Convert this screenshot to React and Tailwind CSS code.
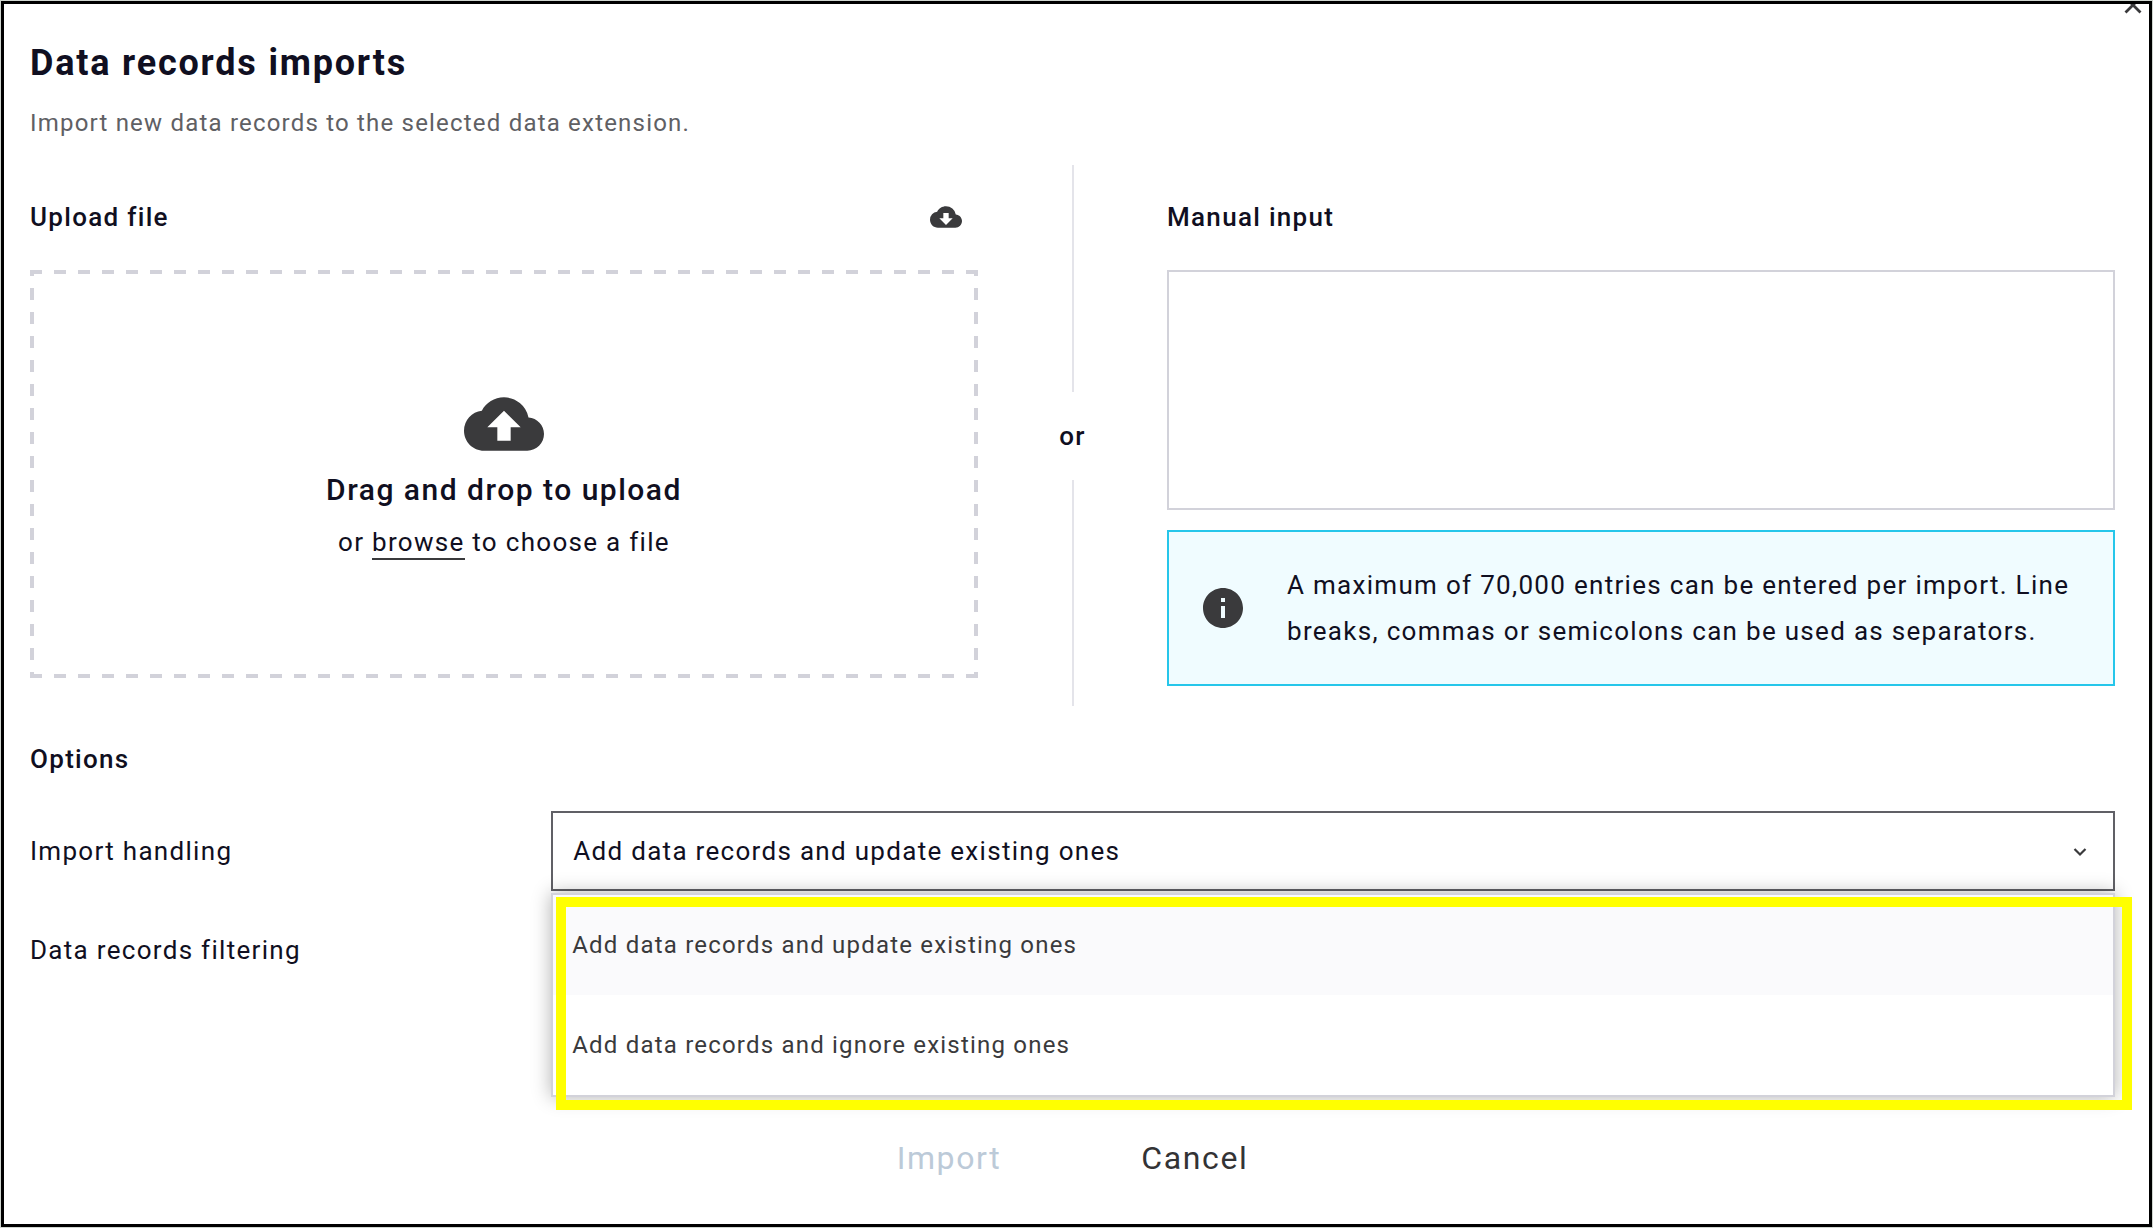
import { MdCloudDownload, MdCloudUpload, MdInfo } from "react-icons/md";

const handlingOptions = [
  "Add data records and update existing ones",
  "Add data records and ignore existing ones",
];

function CloseButton() {
  return (
    <button type="button" aria-label="Close" className="absolute -top-2 right-1.5 h-5 w-5 text-[#3a3a3c]">
      <svg viewBox="0 0 20 20" className="h-5 w-5" fill="none" stroke="currentColor" strokeWidth="2.8">
        <path d="M2.5 1.5 17.5 16.5M17.5 1.5 2.5 16.5" />
      </svg>
    </button>
  );
}

function UploadPanel() {
  return (
    <section className="flex flex-col gap-[37px] pt-9 pb-7">
      <div className="flex h-8 items-center justify-between pr-4">
        <h2 className="text-[26px] leading-8 font-medium">Upload file</h2>
        <button type="button" aria-label="Download template" className="text-[#3a3a3c]">
          <MdCloudDownload className="h-8 w-8" />
        </button>
      </div>
      <div className="flex grow flex-col items-center justify-center pb-0.5 [background-image:linear-gradient(90deg,#d2d2da_6px,transparent_6px_18px,#d2d2da_18px),linear-gradient(90deg,#d2d2da_6px,transparent_6px_18px,#d2d2da_18px),linear-gradient(#d2d2da_6px,transparent_6px_18px,#d2d2da_18px),linear-gradient(#d2d2da_6px,transparent_6px_18px,#d2d2da_18px)] [background-position:top,bottom,left,right] [background-repeat:repeat-x,repeat-x,repeat-y,repeat-y] [background-size:24px_4px,24px_4px,4px_24px,4px_24px]">
        <MdCloudUpload className="h-20 w-20 text-[#3a3a3c]" />
        <p className="mt-1.5 text-[30px] leading-10 font-medium">Drag and drop to upload</p>
        <p className="mt-3 text-[26px] leading-10">
          or{" "}
          <button type="button" className="border-b-2 border-[#3a3a3c] leading-8">
            browse
          </button>{" "}
          to choose a file
        </p>
      </div>
    </section>
  );
}

function Divider() {
  return (
    <div className="flex flex-col items-center">
      <div className="w-0.5 grow bg-[#e4e4ea]" />
      <span className="py-7 text-[26px] leading-8 font-medium">or</span>
      <div className="w-0.5 grow bg-[#e4e4ea]" />
    </div>
  );
}

function ManualPanel() {
  return (
    <section className="flex flex-col pt-9 pb-5">
      <label htmlFor="manual" className="text-[26px] leading-8 font-medium">
        Manual input
      </label>
      <textarea id="manual" className="mt-[37px] h-60 resize-none border-2 border-[#d2d2da] bg-white p-4 text-[26px] outline-none" />
      <div className="mt-5 flex items-center gap-10 border-2 border-[#26c6ea] bg-[#f0fcff] py-[30px] pr-8 pl-[30px]">
        <MdInfo className="h-12 w-12 shrink-0 text-[#3a3a3c]" />
        <p className="text-[26px] leading-[46px]">
          A maximum of 70,000 entries can be entered per import. Line
          <br />
          breaks, commas or semicolons can be used as separators.
        </p>
      </div>
    </section>
  );
}

function HandlingSelect() {
  return (
    <div className="relative">
      <select
        id="handling"
        className="block h-20 w-full appearance-none border-2 border-[#606066] bg-white px-5 text-[26px] text-[#100f21] outline-none"
      >
        {handlingOptions.map((o) => (
          <option key={o}>{o}</option>
        ))}
      </select>
      <svg viewBox="0 0 14 10" className="pointer-events-none absolute top-9 right-7 h-2.5 w-3.5" fill="none" stroke="#3a3a3c" strokeWidth="2.2">
        <path d="M1.5 2 7 7.5 12.5 2" />
      </svg>
      <ul className="absolute inset-x-0 top-[82px] z-10 border-2 border-[#d2d2da] bg-white shadow-[0_0_18px_rgba(0,0,0,0.3)]">
        {handlingOptions.map((o) => (
          <li key={o} className="first:bg-[#fafafc]">
            <button type="button" className="h-[100px] w-full px-[19px] text-left text-[24px] text-[#3a3a3c]">
              {o}
            </button>
          </li>
        ))}
      </ul>
      <div className="pointer-events-none absolute top-[86px] -right-[17px] left-[5px] z-20 h-[213px] border-10 border-[#ffff00]" />
    </div>
  );
}

export default function App() {
  return (
    <div className="flex min-h-screen bg-[#d0d6d0] p-px font-['Roboto',sans-serif] text-[#100f21] **:tracking-wider">
      <main className="relative grow overflow-hidden border-3 border-black bg-white pt-[39px] pr-[34px] pb-8 pl-[26px]">
        <CloseButton />
        <h1 className="text-[36px] leading-10 font-bold">Data records imports</h1>
        <p className="mt-[22px] text-[24px] leading-9 text-[#606064]">Import new data records to the selected data extension.</p>
        <div className="mt-6 grid grid-cols-[1fr_189px_1fr]">
          <UploadPanel />
          <Divider />
          <ManualPanel />
        </div>
        <h2 className="mt-[37px] text-[26px] leading-8 font-medium">Options</h2>
        <div className="mt-9 grid grid-cols-[1fr_3fr] items-center text-[26px] leading-8">
          <label htmlFor="handling">Import handling</label>
          <HandlingSelect />
        </div>
        <p className="mt-[43px] text-[26px] leading-8">Data records filtering</p>
        <div className="mt-42 flex justify-center gap-35 text-[32px] leading-12">
          <button type="button" disabled className="text-[#bccad8]">
            Import
          </button>
          <button type="button" className="text-[#333335]">
            Cancel
          </button>
        </div>
      </main>
    </div>
  );
}
